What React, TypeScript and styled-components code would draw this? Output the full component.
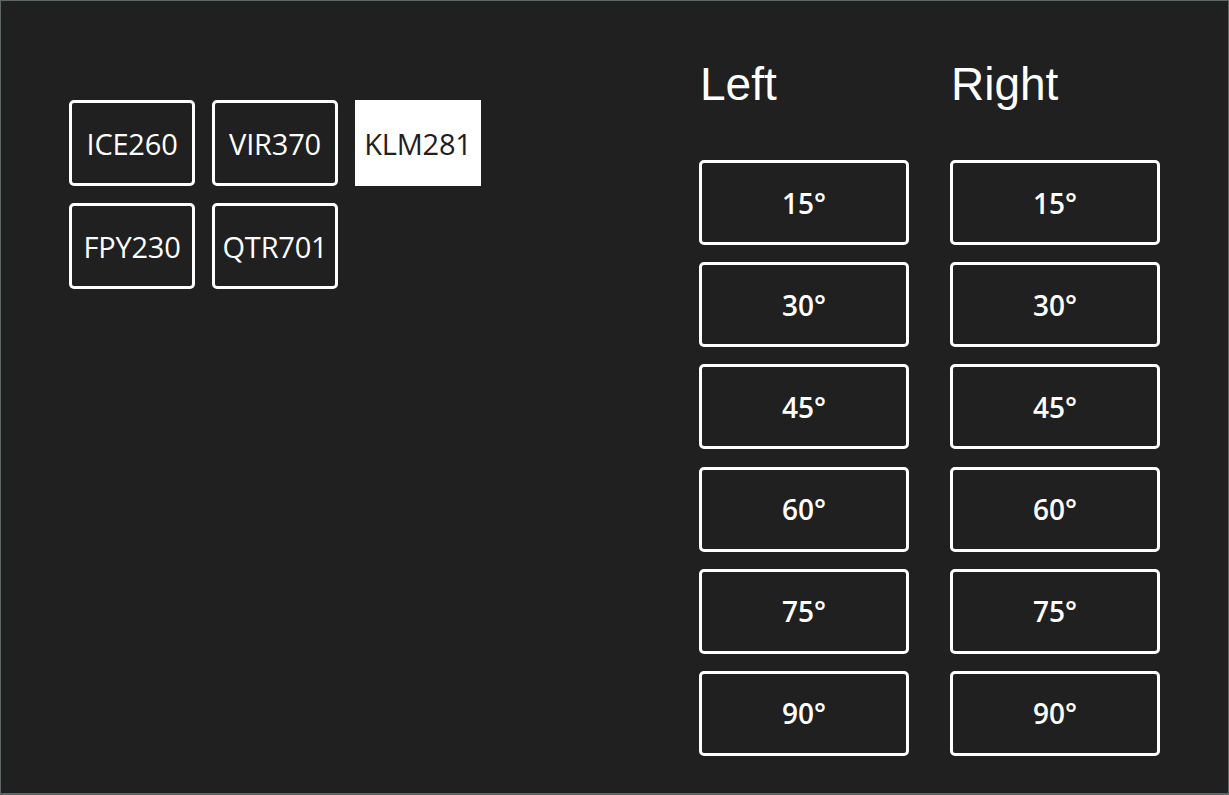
import styled, { createGlobalStyle } from "styled-components"

const GlobalStyle = createGlobalStyle`
  html, body {
    margin: 0;
    padding: 0;
    background: #5f6666;
  }
  * {
    box-sizing: border-box;
  }
`

const flights = ["ICE260", "VIR370", "KLM281", "FPY230", "QTR701"]
const angles = [15, 30, 45, 60, 75, 90]
const selected = "KLM281"

const App = () => {
  return (
    <>
      <GlobalStyle />
      <Screen>
        <FlightGrid>
          {flights.map((f) => (
            <FlightButton key={f} $active={f === selected}>
              {f}
            </FlightButton>
          ))}
        </FlightGrid>

        <TurnPanel>
          {["Left", "Right"].map((side) => (
            <TurnColumn key={side}>
              <SideTitle>{side}</SideTitle>
              <AngleList>
                {angles.map((a) => (
                  <AngleButton key={a}>{a}°</AngleButton>
                ))}
              </AngleList>
            </TurnColumn>
          ))}
        </TurnPanel>
      </Screen>
    </>
  )
}

export default App

const Screen = styled.div`
  width: 1229px;
  height: 795px;
  background: #202020;
  border: 1px solid #5f6666;
  border-bottom-width: 2px;
  display: flex;
  justify-content: space-between;
  padding: 0 68px;
`

const FlightGrid = styled.div`
  display: grid;
  grid-template-columns: repeat(3, 126px);
  grid-auto-rows: 86px;
  gap: 17px 17px;
  padding-top: 99px;
  align-content: start;
`

const FlightButton = styled.div<{ $active?: boolean }>`
  display: flex;
  align-items: center;
  justify-content: center;
  border: ${(p) => (p.$active ? "none" : "3px solid #fff")};
  border-radius: ${(p) => (p.$active ? "0" : "5px")};
  background: ${(p) => (p.$active ? "#fff" : "transparent")};
  color: ${(p) => (p.$active ? "#202020" : "#fff")};
  font-family: "Open Sans", sans-serif;
  font-size: 29px;
  font-weight: 400;
  letter-spacing: -0.2px;
`

const TurnPanel = styled.div`
  display: flex;
  gap: 41px;
  padding-top: 57px;
`

const TurnColumn = styled.div`
  display: flex;
  flex-direction: column;
  width: 210px;
`

const SideTitle = styled.h2`
  margin: 0 0 50px 1px;
  height: 52px;
  line-height: 52px;
  font-family: "Liberation Sans", Arial, sans-serif;
  font-size: 46px;
  font-weight: 400;
  color: #fff;
`

const AngleList = styled.div`
  display: flex;
  flex-direction: column;
  gap: 17.2px;
`

const AngleButton = styled.div`
  height: 85px;
  display: flex;
  align-items: center;
  justify-content: center;
  border: 3px solid #fff;
  border-radius: 5px;
  color: #fff;
  font-family: "Open Sans", sans-serif;
  font-size: 28px;
  font-weight: 600;
`
